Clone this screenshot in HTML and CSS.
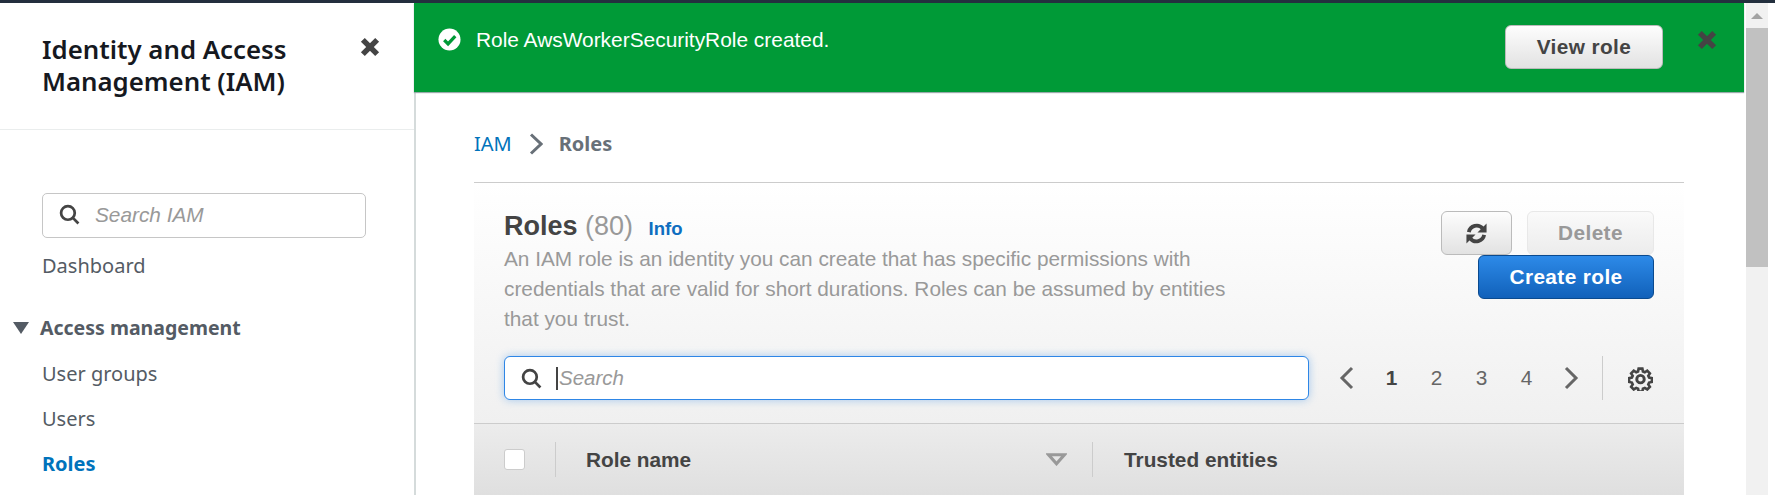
FILE: index.html
```html
<!DOCTYPE html>
<html lang="en">
<head>
    <meta charset="UTF-8">
    <title>Roles - IAM</title>
    <link rel="stylesheet" href="styles.css">
</head>
<body>
<div class="topbar"></div>
<div class="layout">
    <!-- Left nav -->
    <aside class="sidenav">
        <div class="sidenav-head">
            <h2 class="sidenav-title">Identity and Access Management (IAM)</h2>
            <svg class="close-icon" viewBox="0 0 20 20"><path d="M3.5 3.5l13 13M16.5 3.5l-13 13"/></svg>
        </div>
        <div class="sidenav-body">
            <div class="nav-search">
                <svg class="search-icon" viewBox="0 0 20 20"><circle cx="8.5" cy="8.5" r="6.5"/><path d="M13.2 13.2l5.3 5.3"/></svg>
                <span>Search IAM</span>
            </div>
            <a class="nav-link">Dashboard</a>
            <div class="nav-section"><i class="caret"></i>Access management</div>
            <a class="nav-link nav-tight">User groups</a>
            <a class="nav-link nav-tight">Users</a>
            <a class="nav-link nav-tight active">Roles</a>
        </div>
    </aside>

    <main class="content">
        <div class="flash">
            <svg class="check-icon" viewBox="0 0 24 24"><circle cx="12" cy="12" r="11.5"/><path d="M6.5 12.5l4 4 7.5-8"/></svg>
            <span class="flash-text">Role AwsWorkerSecurityRole created.</span>
            <button class="btn view-btn">View role</button>
            <svg class="close-icon flash-close" viewBox="0 0 20 20"><path d="M3.5 3.5l13 13M16.5 3.5l-13 13"/></svg>
        </div>

        <div class="page">
            <nav class="crumbs">
                <a>IAM</a>
                <svg class="crumb-sep" viewBox="0 0 14 22"><path d="M2 1.5l10 9.5-10 9.5"/></svg>
                <span>Roles</span>
            </nav>

            <section class="panel">
                <div class="panel-head">
                    <div class="panel-info">
                        <h1 class="panel-title">Roles <span class="count">(80)</span> <a class="info">Info</a></h1>
                        <p class="panel-desc">An IAM role is an identity you can create that has specific permissions with credentials that are valid for short durations. Roles can be assumed by entities that you trust.</p>
                    </div>
                    <div class="panel-actions">
                        <div class="actions-row">
                            <button class="btn refresh-btn">
                                <svg viewBox="0 0 24 24"><path d="M4 10.500A8.300 8.300 0 0 1 18.500 6.800"/><path d="M20 13.500A8.300 8.300 0 0 1 5.500 17.200"/><path class="fill" d="M22.500 1.500v9.500h-9.500zM1.500 22.500v-9.500h9.500z"/></svg>
                            </button>
                            <button class="btn delete-btn">Delete</button>
                        </div>
                        <button class="btn create-btn">Create role</button>
                    </div>
                </div>

                <div class="toolbar">
                    <div class="table-search">
                        <svg class="search-icon" viewBox="0 0 20 20"><circle cx="8.5" cy="8.5" r="6.5"/><path d="M13.2 13.2l5.3 5.3"/></svg>
                        <i class="cursor"></i>
                        <span>Search</span>
                    </div>
                    <div class="pager">
                        <svg class="pager-arrow" viewBox="0 0 16 24"><path d="M13 2L3 12l10 10"/></svg>
                        <span class="page-num current">1</span>
                        <span class="page-num">2</span>
                        <span class="page-num">3</span>
                        <span class="page-num">4</span>
                        <svg class="pager-arrow" viewBox="0 0 16 24"><path d="M3 2l10 10L3 22"/></svg>
                    </div>
                    <div class="settings">
                        <svg viewBox="0 0 24 24"><path d="M10 1.500h4l.6 3 2 .9 2.600-1.700 2.800 2.900-1.700 2.500.9 2 3 .6v4l-3 .6-.9 2 1.700 2.600-2.800 2.800-2.600-1.700-2 .9-.6 3h-4l-.6-3-2-.9-2.600 1.700-2.800-2.800 1.700-2.600-.9-2-3-.6v-4l3-.6.9-2-1.700-2.500 2.800-2.900 2.600 1.700 2-.9z" transform="translate(1.200 1.200) scale(.9)"/><circle cx="12" cy="12.600" r="3.600"/></svg>
                    </div>
                </div>

                <div class="table-head">
                    <div class="cell-check"><span class="checkbox"></span></div>
                    <div class="cell-name">
                        <span>Role name</span>
                        <svg class="sort-icon" viewBox="0 0 20 12"><path d="M2.500 1.500h15L10 10z"/></svg>
                    </div>
                    <div class="cell-trust">Trusted entities</div>
                </div>
            </section>
        </div>
    </main>

    <div class="scrollbar">
        <div class="scroll-up"><i></i></div>
        <div class="scroll-thumb"></div>
    </div>
</div>
</body>
</html>
```
FILE: styles.css
```css
* {
    margin: 0;
    padding: 0;
    box-sizing: border-box;
}

html, body {
    height: 100%;
    overflow: hidden;
}

body {
    font-family: 'Liberation Sans', Arial, sans-serif;
    background: white;
    color: #444;
}

.topbar {
    height: 3px;
    background: #232f3e;
}

.layout {
    display: flex;
    height: 492px;
}

/* Left nav */
.sidenav {
    width: 416px;
    flex-shrink: 0;
    border-right: 2px solid #d5dbdb;
    font-family: 'Noto Sans', sans-serif;
}

.sidenav-head {
    display: flex;
    justify-content: space-between;
    height: 127px;
    padding: 30px 33px 0 42px;
    border-bottom: 1px solid #eaeded;
}

.sidenav-title {
    width: 290px;
    font-size: 25.8px;
    line-height: 32px;
    font-weight: 600;
    color: #16191f;
}

.close-icon {
    width: 22px;
    height: 22px;
    margin-top: 3px;
    fill: none;
    stroke: #444;
    stroke-width: 5;
}

.sidenav-body {
    padding: 63px 48px 0 42px;
}

.nav-search {
    display: flex;
    align-items: center;
    gap: 15px;
    height: 45px;
    padding: 0 0 2px 16px;
    border: 1px solid #c6c6c6;
    border-radius: 5px;
    font-family: 'Liberation Sans', sans-serif;
    font-size: 20.8px;
    font-style: italic;
    color: #999;
}

.search-icon {
    width: 21px;
    height: 21px;
    flex-shrink: 0;
    fill: none;
    stroke: #444;
    stroke-width: 2.6;
}

.nav-link {
    display: block;
    font-size: 20px;
    line-height: 25px;
    color: #545b64;
    margin-top: 15px;
}

.nav-tight {
    margin-top: 20px;
}

.nav-tight.active {
    color: #0073bb;
    font-weight: 700;
}

.nav-section {
    display: flex;
    align-items: center;
    margin: 37px 0 0 -29px;
    font-size: 19.5px;
    line-height: 25px;
    font-weight: 700;
    color: #545b64;
}

.nav-section + .nav-tight {
    margin-top: 21px;
}

.caret {
    width: 0;
    height: 0;
    margin-right: 11px;
    border-left: 8px solid transparent;
    border-right: 8px solid transparent;
    border-top: 12px solid #545b64;
}

/* Main column, the flash sits over the nav border */
.content {
    width: 1330px;
    margin-left: -2px;
    flex-shrink: 0;
}

.flash {
    display: flex;
    align-items: flex-start;
    height: 89px;
    padding: 22px 0 0 24px;
    background: #009a37;
    box-shadow: 0 1px 1px #9aa;
}

.check-icon {
    width: 23px;
    height: 23px;
    margin-top: 3px;
    flex-shrink: 0;
}

.check-icon circle {
    fill: white;
}

.check-icon path {
    fill: none;
    stroke: #009a37;
    stroke-width: 3.4;
}

.flash-text {
    flex: 1;
    margin: 3px 0 0 15px;
    font-size: 20.9px;
    line-height: 24px;
    color: white;
}

.btn {
    font-family: 'Liberation Sans', sans-serif;
    font-size: 20.8px;
    font-weight: 700;
    letter-spacing: 0.4px;
    border-radius: 6px;
    border: 1px solid #bbb;
    height: 44px;
    color: #444;
    background: linear-gradient(#fdfdfd, #e2e2e2);
}

.view-btn {
    width: 158px;
    margin-right: 33px;
}

.flash-close {
    margin: 4px 26px 0 0;
}

.page {
    padding: 0 60px;
}

.crumbs {
    display: flex;
    align-items: center;
    height: 91px;
    padding-top: 13px;
    font-family: 'Noto Sans', sans-serif;
    font-size: 20px;
    color: #0073bb;
    border-bottom: 1px solid #ccc;
}

.crumbs span {
    color: #687078;
    font-weight: 700;
}

.crumb-sep {
    width: 14px;
    height: 22px;
    margin: 0 16px 0 17px;
    fill: none;
    stroke: #687078;
    stroke-width: 3;
}

.panel {
    background: linear-gradient(#fff, #f0f0f0);
    height: 240px;
}

.panel-head {
    display: flex;
    justify-content: space-between;
    height: 173px;
    padding: 28px 30px 0 30px;
}

.panel-info {
    width: 740px;
}

.panel-title {
    font-size: 27px;
    line-height: 30px;
    font-weight: 700;
    color: #444;
}

.count {
    font-weight: 400;
    color: #999;
}

.info {
    margin-left: 8px;
    font-size: 18.5px;
    color: #0f6ec0;
}

.panel-desc {
    font-size: 20.8px;
    line-height: 30px;
    color: #999;
}

.panel-actions {
    display: flex;
    flex-direction: column;
    align-items: flex-end;
}

.actions-row {
    display: flex;
    gap: 15px;
}

.refresh-btn {
    width: 71px;
    height: 44px;
}

.refresh-btn svg {
    width: 23px;
    height: 23px;
    display: block;
    margin: 0 auto;
    fill: none;
    stroke: #444;
    stroke-width: 4;
}

.refresh-btn svg .fill {
    fill: #444;
    stroke: none;
}

.delete-btn {
    width: 127px;
    color: #999;
    border-color: #e8e8e8;
    background: linear-gradient(#fafafa, #ececec);
}

.create-btn {
    width: 176px;
    color: white;
    border-color: #0a4a8f;
    background: linear-gradient(#2d8ae8, #1161ba);
}

.toolbar {
    display: flex;
    align-items: center;
    height: 44px;
    padding-left: 30px;
}

.table-search {
    display: flex;
    align-items: center;
    width: 805px;
    height: 44px;
    padding-left: 16px;
    background: white;
    border: 1px solid #2e86e6;
    border-radius: 6px;
    box-shadow: 0 0 8px rgba(46, 134, 230, 0.4);
    font-size: 20.5px;
    font-style: italic;
    color: #999;
}

.cursor {
    width: 2px;
    height: 23px;
    margin: 0 1px 0 14px;
    background: #444;
}

.pager {
    display: flex;
    align-items: center;
    margin-left: 30px;
    font-size: 20.8px;
    color: #666;
}

.pager-arrow {
    width: 16px;
    height: 24px;
    fill: none;
    stroke: #666;
    stroke-width: 3;
}

.page-num {
    width: 45px;
    text-align: center;
}

.page-num:nth-of-type(1) {
    margin-left: 14px;
}

.page-num:nth-of-type(4) {
    margin-right: 14px;
}

.current {
    font-weight: 700;
    color: #444;
}

.settings {
    display: flex;
    align-items: center;
    height: 44px;
    margin-left: 23px;
    padding-left: 25px;
    border-left: 1px solid #ccc;
}

.settings svg {
    width: 25px;
    height: 25px;
    fill: none;
    stroke: #444;
    stroke-width: 2.8;
}

.table-head {
    display: flex;
    align-items: center;
    height: 72px;
    margin-top: 23px;
    border-top: 1px solid #ccc;
    background: linear-gradient(#ececec, #dfdfdf);
    font-size: 20.8px;
    font-weight: 700;
    color: #444;
}

.cell-check {
    width: 81px;
    height: 35px;
    display: flex;
    align-items: center;
    padding-left: 30px;
}

.checkbox {
    width: 21px;
    height: 21px;
    background: white;
    border: 1px solid #ccc;
    border-radius: 3px;
}

.cell-name {
    display: flex;
    align-items: center;
    justify-content: space-between;
    width: 537px;
    height: 35px;
    padding: 0 25px 0 30px;
    border-left: 1px solid #ccc;
}

.sort-icon {
    width: 21px;
    height: 13px;
    fill: none;
    stroke: #999;
    stroke-width: 3;
}

.cell-trust {
    height: 35px;
    line-height: 35px;
    padding-left: 31px;
    border-left: 1px solid #ccc;
}

/* Window scrollbar */
.scrollbar {
    width: 22px;
    margin-left: 2px;
    height: 100%;
    background: #f1f1f1;
}

.scroll-up {
    height: 25px;
    padding: 10px 0 0 5px;
}

.scroll-up i {
    display: block;
    width: 0;
    height: 0;
    border-left: 6px solid transparent;
    border-right: 6px solid transparent;
    border-bottom: 6px solid #a3a3a3;
}

.scroll-thumb {
    height: 239px;
    background: #c1c1c1;
}
```
